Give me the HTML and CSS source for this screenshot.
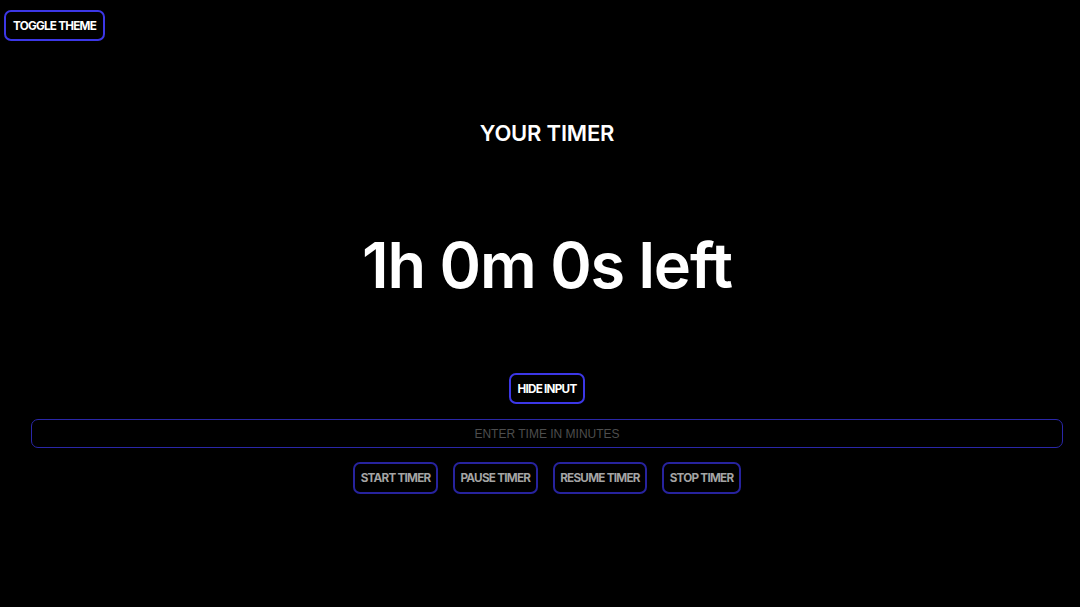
FILE: index.html
```html
<!DOCTYPE html>
<html lang="en">
<head>
<meta charset="utf-8">
<title>Timer</title>
<link rel="stylesheet" href="styles.css">
</head>
<body>
<header class="top">
  <button class="btn btn-active">TOGGLE THEME</button>
</header>
<main class="timer">
  <h2 class="title">YOUR TIMER</h2>
  <h1 class="remaining">1h 0m 0s left</h1>
  <button class="btn btn-active hide-btn">HIDE INPUT</button>
  <input class="minutes" type="text" placeholder="ENTER TIME IN MINUTES">
  <div class="controls">
    <button class="btn btn-dim">START TIMER</button>
    <button class="btn btn-dim">PAUSE TIMER</button>
    <button class="btn btn-dim">RESUME TIMER</button>
    <button class="btn btn-dim">STOP TIMER</button>
  </div>
</main>
</body>
</html>
```
FILE: styles.css
```css
* { box-sizing: border-box; }
html, body { margin: 0; padding: 0; background: #000; }
body {
  font-family: Inter, "Noto Sans", sans-serif;
  color: #fff;
  width: 1080px;
  height: 607px;
  overflow: hidden;
}
.top {
  padding: 10px 0 0 4px;
  height: 41px;
}
.btn {
  font-family: Inter, sans-serif;
  font-weight: 700;
  font-size: 11.7px;
  letter-spacing: -0.75px;
  background: #000;
  border-radius: 7px;
  padding: 0 7px;
  height: 31px;
  cursor: pointer;
}
.btn-active {
  color: #fff;
  border: 2px solid #3c37e6;
}
.btn-dim {
  color: #a4a4a4;
  border: 2px solid #27239e;
  height: 32px;
  padding: 0 5.5px;
}
.timer {
  display: flex;
  flex-direction: column;
  align-items: center;
  margin-left: 31px;
  width: 1032px;
}
.title {
  margin: 78px 0 0;
  font-size: 22px;
  font-weight: 600;
  line-height: 28px;
  letter-spacing: -0.2px;
}
.remaining {
  margin: 80px 0 0;
  font-size: 63px;
  font-weight: 600;
  line-height: 76px;
  letter-spacing: -1.2px;
}
.hide-btn {
  margin-top: 70px;
}
.minutes {
  margin-top: 15px;
  width: 100%;
  height: 29px;
  background: #000;
  border: 1.5px solid #2a27a8;
  border-radius: 7px;
  text-align: center;
  font-family: "Liberation Sans", Arial, sans-serif;
  font-size: 12px;
  color: #fff;
  outline: none;
}
.minutes::placeholder { color: #4d4d4d; }
.controls {
  margin-top: 14px;
  display: flex;
  gap: 15px;
}
```
